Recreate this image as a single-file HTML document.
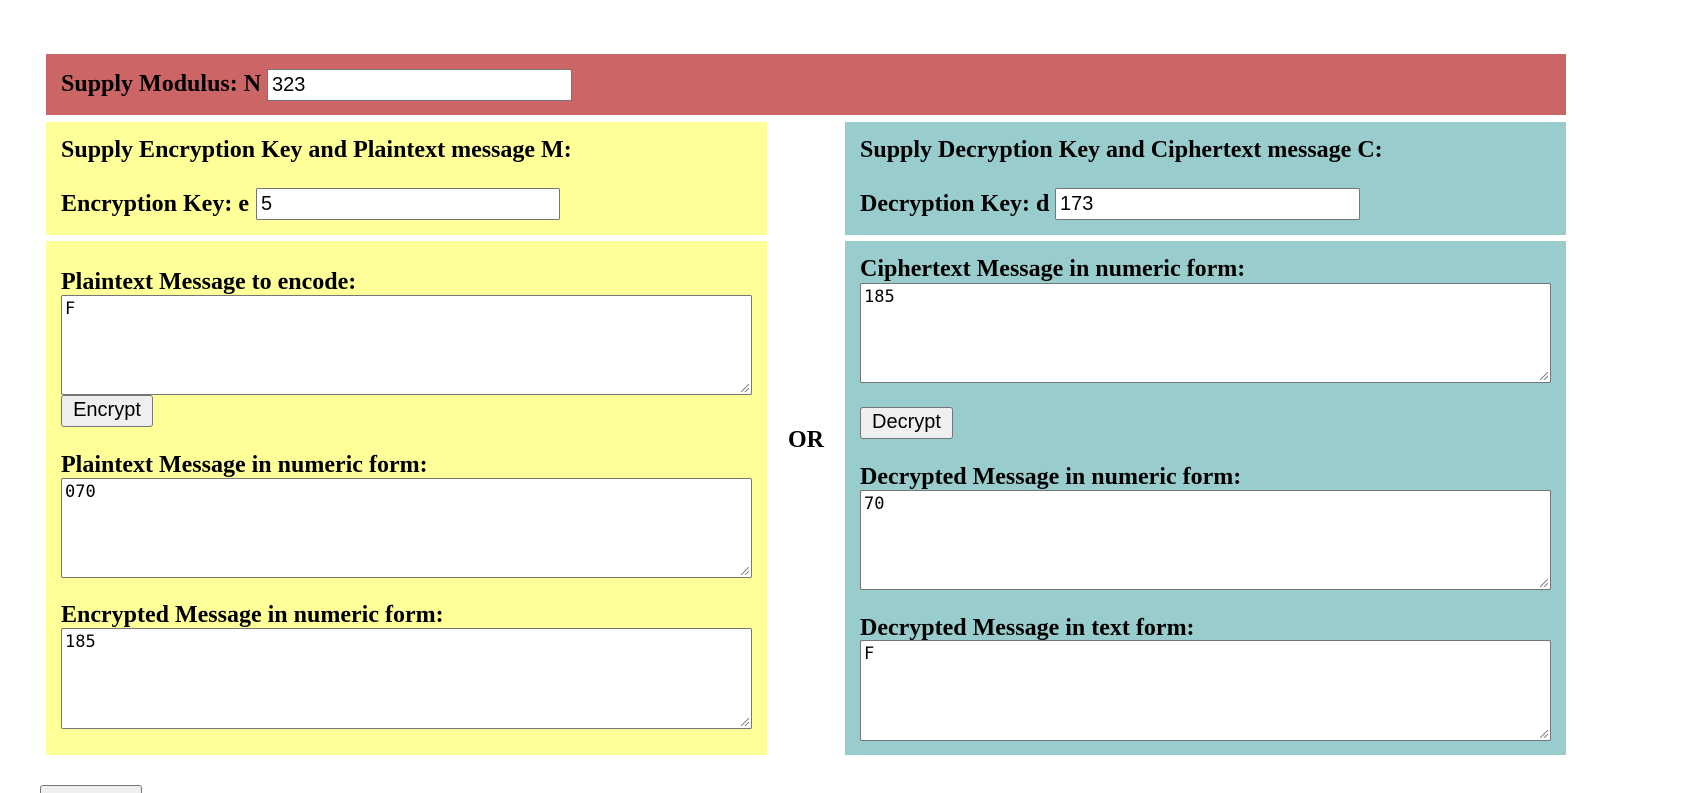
<!DOCTYPE html>
<html><head><style>
html,body{margin:0;width:1698px;height:793px;overflow:hidden;}
body{background:#fff;position:relative;font-family:"Liberation Serif",serif;}
.a{position:absolute;}
.b{font-weight:bold;font-size:24px;color:#000;line-height:26px;white-space:nowrap;}
.red{background:#cc6666;}
.yel{background:#ffff99;}
.teal{background:#99cccc;}
.in{background:#fff;border:1px solid #767676;border-radius:2px;box-sizing:border-box;font-family:"Liberation Sans",sans-serif;font-size:20px;padding:3px 4px;line-height:24px;}
.ta{background:#fff;border:1px solid #767676;border-radius:2px;box-sizing:border-box;font-family:"DejaVu Sans Mono","Liberation Mono",monospace;font-size:17px;padding:3px 3px;line-height:21px;}
.ta:after{content:"";position:absolute;right:2px;bottom:2px;width:8px;height:8px;background:linear-gradient(135deg,transparent 45%,#888 46%,#888 54%,transparent 55%,transparent 70%,#888 71%,#888 79%,transparent 80%);}
.btn{background:#efefef;border:1px solid #767676;border-radius:3px;box-sizing:border-box;font-family:"Liberation Sans",sans-serif;font-size:20px;text-align:center;line-height:29px;}
</style></head><body>
<div class="a red" style="left:46px;top:54px;width:1520px;height:61px"></div>
<div class="a b" style="left:61px;top:71px">Supply Modulus: N</div>
<div class="a in" style="left:267px;top:69px;width:305px;height:32px">323</div>

<div class="a yel" style="left:46px;top:122px;width:721px;height:113px"></div>
<div class="a teal" style="left:845px;top:122px;width:721px;height:113px"></div>
<div class="a b" style="left:61px;top:137px">Supply Encryption Key and Plaintext message M:</div>
<div class="a b" style="left:61px;top:191px">Encryption Key: e</div>
<div class="a in" style="left:256px;top:188px;width:304px;height:32px">5</div>
<div class="a b" style="left:860px;top:137px">Supply Decryption Key and Ciphertext message C:</div>
<div class="a b" style="left:860px;top:191px">Decryption Key: d</div>
<div class="a in" style="left:1055px;top:188px;width:305px;height:32px">173</div>

<div class="a yel" style="left:46px;top:241px;width:721px;height:514px"></div>
<div class="a teal" style="left:845px;top:241px;width:721px;height:514px"></div>

<div class="a b" style="left:61px;top:269px">Plaintext Message to encode:</div>
<div class="a ta" style="left:61px;top:295px;width:691px;height:100px">F</div>
<div class="a btn" style="left:61px;top:395px;width:92px;height:32px">Encrypt</div>
<div class="a b" style="left:61px;top:452px">Plaintext Message in numeric form:</div>
<div class="a ta" style="left:61px;top:478px;width:691px;height:100px">070</div>
<div class="a b" style="left:61px;top:602px">Encrypted Message in numeric form:</div>
<div class="a ta" style="left:61px;top:628px;width:691px;height:101px">185</div>

<div class="a b" style="left:788px;top:427px">OR</div>

<div class="a b" style="left:860px;top:256px">Ciphertext Message in numeric form:</div>
<div class="a ta" style="left:860px;top:283px;width:691px;height:100px">185</div>
<div class="a btn" style="left:860px;top:407px;width:93px;height:32px">Decrypt</div>
<div class="a b" style="left:860px;top:464px">Decrypted Message in numeric form:</div>
<div class="a ta" style="left:860px;top:490px;width:691px;height:100px">70</div>
<div class="a b" style="left:860px;top:615px">Decrypted Message in text form:</div>
<div class="a ta" style="left:860px;top:640px;width:691px;height:101px">F</div>

<div class="a btn" style="left:40px;top:785px;width:102px;height:32px"></div>
</body></html>
